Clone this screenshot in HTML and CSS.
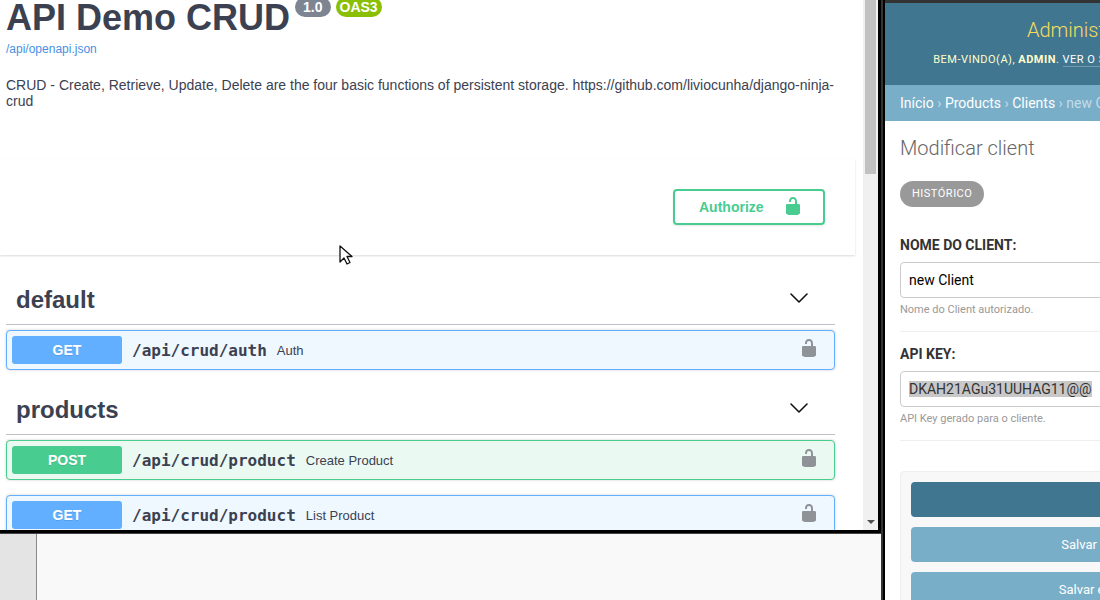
FILE: index.html
```html
<!DOCTYPE html>
<html lang="pt-BR">
<head>
<meta charset="utf-8">
<title>API Demo CRUD</title>
<link rel="stylesheet" href="styles.css">
</head>
<body>
<svg class="defs" aria-hidden="true">
  <symbol id="unlocked" viewBox="0 0 20 20"><path d="M15.8 8H14V5.6C14 2.703 12.665 1 10 1 7.334 1 6 2.703 6 5.6V6h2v-.801C8 3.754 8.797 3 10 3c1.203 0 2 .754 2 2.199V8H4c-.553 0-1 .646-1 1.199V17c0 .549.428 1.139.951 1.307l1.197.387C5.672 18.861 6.55 19 7.1 19h5.8c.549 0 1.428-.139 1.951-.307l1.196-.387c.524-.167.953-.757.953-1.306V9.199C17 8.646 16.352 8 15.8 8z"/></symbol>
  <symbol id="chevron" viewBox="0 0 20 20"><path d="M2 6l8 8 8-8" fill="none" stroke="#111" stroke-width="1.6" stroke-linecap="round" stroke-linejoin="round"/></symbol>
</svg>
<div class="desktop">
  <div class="left">
    <div class="api-window">
      <main class="api">
        <header class="info">
          <div class="title-row">
            <h1 class="title">API Demo CRUD</h1>
            <span class="badge">1.0</span>
            <span class="badge badge-oas">OAS3</span>
          </div>
          <a class="spec-link" href="#openapi">/api/openapi.json</a>
          <p class="description">CRUD - Create, Retrieve, Update, Delete are the four basic functions of persistent storage. https://github.com/liviocunha/django-ninja-crud</p>
        </header>
        <section class="scheme">
          <button class="authorize" type="button">Authorize <svg class="icon"><use href="#unlocked"/></svg></button>
        </section>
        <section class="group">
          <div class="group-head"><h2 class="group-title">default</h2>
            <button class="icon-button" type="button" aria-label="Collapse default"><svg class="icon"><use href="#chevron"/></svg></button></div>
          <div class="op op-get"><span class="method">GET</span><span class="path">/api/crud/auth</span><span class="summary">Auth</span>
            <button class="icon-button lock" type="button" aria-label="Authorize auth"><svg class="icon"><use href="#unlocked"/></svg></button></div>
        </section>
        <section class="group">
          <div class="group-head"><h2 class="group-title">products</h2>
            <button class="icon-button" type="button" aria-label="Collapse products"><svg class="icon"><use href="#chevron"/></svg></button></div>
          <div class="op op-post"><span class="method">POST</span><span class="path">/api/crud/product</span><span class="summary">Create Product</span>
            <button class="icon-button lock" type="button" aria-label="Authorize create product"><svg class="icon"><use href="#unlocked"/></svg></button></div>
          <div class="op op-get"><span class="method">GET</span><span class="path">/api/crud/product</span><span class="summary">List Product</span>
            <button class="icon-button lock" type="button" aria-label="Authorize list product"><svg class="icon"><use href="#unlocked"/></svg></button></div>
        </section>
      </main>
      <div class="scrollbar">
        <div class="thumb"></div>
        <svg class="scroll-arrow" viewBox="0 0 8 4"><path d="M0 0h8L4 4z" fill="#505050"/></svg>
      </div>
    </div>
    <div class="lower-window"><div class="gutter"></div></div>
  </div>
  <div class="admin-window">
    <div class="admin">
      <header class="admin-header">
        <div class="site-name">Administração do Django</div>
        <div class="user-tools">BEM-VINDO(A), <strong>ADMIN</strong>. <a href="#site">VER O SITE</a> / <a href="#senha">ALTERAR SENHA</a> / <a href="#sair">ENCERRAR SESSÃO</a></div>
      </header>
      <nav class="crumbs"><a href="#inicio">Início</a> › <a href="#products">Products</a> › <a href="#clients">Clients</a> › new Client</nav>
      <div class="content">
        <h1 class="admin-title">Modificar client</h1>
        <a class="history" href="#historico">HISTÓRICO</a>
        <form class="form">
          <div class="form-row">
            <label class="label" for="name">NOME DO CLIENT:</label>
            <input class="field" id="name" type="text" value="new Client">
            <div class="help">Nome do Client autorizado.</div>
          </div>
          <div class="form-row">
            <label class="label" for="key">API KEY:</label>
            <input class="field" id="key" type="text" value="DKAH21AGu31UUHAG11@@">
            <div class="help">API Key gerado para o cliente.</div>
          </div>
          <div class="submit-row">
            <button class="submit submit-main" type="button">SALVAR</button>
            <button class="submit" type="button">Salvar e adicionar outro(a)</button>
            <button class="submit" type="button">Salvar e continuar editando</button>
          </div>
        </form>
      </div>
    </div>
  </div>
  <svg class="pointer" viewBox="0 0 14 21" aria-hidden="true"><path d="M1 1v16l4-4 3 6 3-1.500-3-6h5z" fill="#fff" stroke="#111" stroke-width="1.300" stroke-linejoin="round"/></svg>
</div>
<script src="script.js"></script>
</body>
</html>
```
FILE: styles.css
```css
* { box-sizing: border-box; }
body { margin: 0; background: #fff; }
h1, h2, p { margin: 0; }
a { text-decoration: none; }
button { font: inherit; cursor: pointer; }
.defs { display: none; }
.icon { display: block; width: 20px; height: 20px; }

.desktop { position: relative; display: flex; height: 100vh; overflow: hidden; }
.left { flex: 1; min-width: 0; display: flex; flex-direction: column; }

/* API documentation window */
.api-window { flex: 1; min-height: 0; display: flex; overflow: hidden; background: #fff; border-right: 3px solid #000; border-bottom: 3px solid #000; }
.api { flex: 1; min-width: 0; padding-right: 8px; font-family: "Liberation Sans", Arial, sans-serif; color: #3b4151; }
.info { padding: 0 20px 50px 6px; }
.title-row { display: flex; align-items: flex-start; gap: 5px; }
.title { font-size: 36px; line-height: 36px; font-weight: 700; white-space: nowrap; }
.badge { margin-top: -3px; padding: 0 8px; border-radius: 10px; background: #7d8492; color: #fff; font-size: 14px; line-height: 20px; font-weight: 700; }
.badge-oas { padding: 0 4px; background: #89bf04; }
.spec-link { display: block; margin-top: 5px; font-size: 12px; line-height: 16px; color: #4990e2; }
.description { margin-top: 20px; font-size: 14px; line-height: 16px; }
.scheme { display: flex; justify-content: flex-end; padding: 30px; box-shadow: 0 1px 2px rgba(0, 0, 0, .15); }
.authorize { display: flex; align-items: center; justify-content: space-between; width: 152px; height: 36px; padding: 0 20px 0 24px; border: 2px solid #49cc90; border-radius: 4px; background: transparent; box-shadow: 0 1px 2px rgba(0, 0, 0, .1); color: #49cc90; font-size: 14px; font-weight: 700; }
.authorize .icon { margin-bottom: 2px; fill: #49cc90; }
.group { padding: 0 20px 0 6px; }
.scheme + .group { margin-top: 20px; }
.group-head { display: flex; align-items: center; justify-content: space-between; height: 50px; margin-bottom: 5px; padding: 0 16px 0 10px; border-bottom: 1px solid #c0c1c8; }
.group-title { font-size: 24px; line-height: 28px; font-weight: 700; }
.icon-button { margin-right: 10px; padding: 0 0 4px; border: 0; background: transparent; }
.op { display: flex; align-items: center; height: 40px; margin-bottom: 15px; padding: 5px; border: 1px solid; border-radius: 4px; box-shadow: 0 0 3px rgba(0, 0, 0, .19); }
.op-get { border-color: #61affe; background: #eff7ff; }
.op-post { border-color: #49cc90; background: #ebf9f3; }
.method { width: 110px; border-radius: 3px; color: #fff; font-size: 14px; line-height: 28px; font-weight: 700; text-align: center; text-shadow: 0 1px 0 rgba(0, 0, 0, .1); }
.op-get .method { background: #61affe; }
.op-post .method { background: #49cc90; }
.path { padding: 0 10px; font-family: "DejaVu Sans Mono", monospace; font-size: 16px; font-weight: 700; }
.summary { flex: 1; font-size: 13px; }
.lock .icon { fill: #8f9296; }

.scrollbar { display: flex; flex-direction: column; align-items: center; justify-content: space-between; width: 15px; padding-bottom: 6px; background: #f0f0f0; }
.thumb { width: 11px; height: 174px; background: #c1c1c1; }
.scroll-arrow { width: 8px; height: 4px; }

.lower-window { display: flex; height: 67px; border-top: 1px solid #444; background: #f9f9f9; }
.gutter { width: 37px; border-right: 1px solid #888; background: #e4e4e4; }

/* Administration window, cut off by the right edge of the desktop */
.admin-window { width: 219px; overflow: hidden; border-left: 2px solid #333; background: #000; padding-left: 2px; }
.admin { width: 505px; height: 100%; border-top: 3px solid #333; background: #fff; color: #333; font-family: Roboto, sans-serif; }
.admin-header { height: 82px; padding-top: 12px; background: #417690; text-align: center; white-space: nowrap; }
.site-name { color: #f5dd5d; font-size: 20px; line-height: 30px; font-weight: 300; }
.user-tools { margin-top: 7px; color: #ffc; font-size: 11px; line-height: 16px; letter-spacing: .5px; }
.user-tools a { border-bottom: 1px solid #759bae; color: #fff; }
.crumbs { padding: 0 15px; background: #79aec8; color: #c4dce8; font-size: 14px; line-height: 36px; white-space: nowrap; }
.crumbs a { color: #fff; }
.content { padding: 15px; }
.admin-title { color: #666; font-size: 20px; line-height: 24px; font-weight: 300; }
.history { display: inline-block; margin-top: 21px; padding: 0 12px; border-radius: 13px; background: #999; color: #fff; font-size: 11px; line-height: 26px; letter-spacing: .5px; vertical-align: top; }
.form { padding-top: 16px; }
.form-row { padding: 13px 0 14px; border-bottom: 1px solid #eee; }
.label { display: block; margin-bottom: 8px; font-size: 14px; line-height: 18px; font-weight: 700; }
.field { display: block; width: 100%; height: 36px; padding: 0 8px; border: 1px solid #ccc; border-radius: 4px; background: #fff; color: #000; font-family: inherit; font-size: 14px; }
.field:focus { outline: none; }
.field::selection { background: #c8c8c8; color: #333; }
.help { margin-top: 5px; color: #999; font-size: 11px; line-height: 14px; }
.submit-row { display: flex; flex-direction: column; gap: 10px; margin-top: 30px; padding: 10px; border: 1px solid #eee; border-radius: 4px; background: #f8f8f8; }
.submit { height: 35px; border: 0; border-radius: 4px; background: #79aec8; color: #fff; font-size: 13px; }
.submit-main { background: #417690; }

.pointer { position: absolute; left: 339px; top: 245px; width: 14px; height: 21px; }
```
FILE: script.js
```js
const key = document.getElementById('key');
key.focus({ preventScroll: true });
key.setSelectionRange(0, key.value.length);
```
